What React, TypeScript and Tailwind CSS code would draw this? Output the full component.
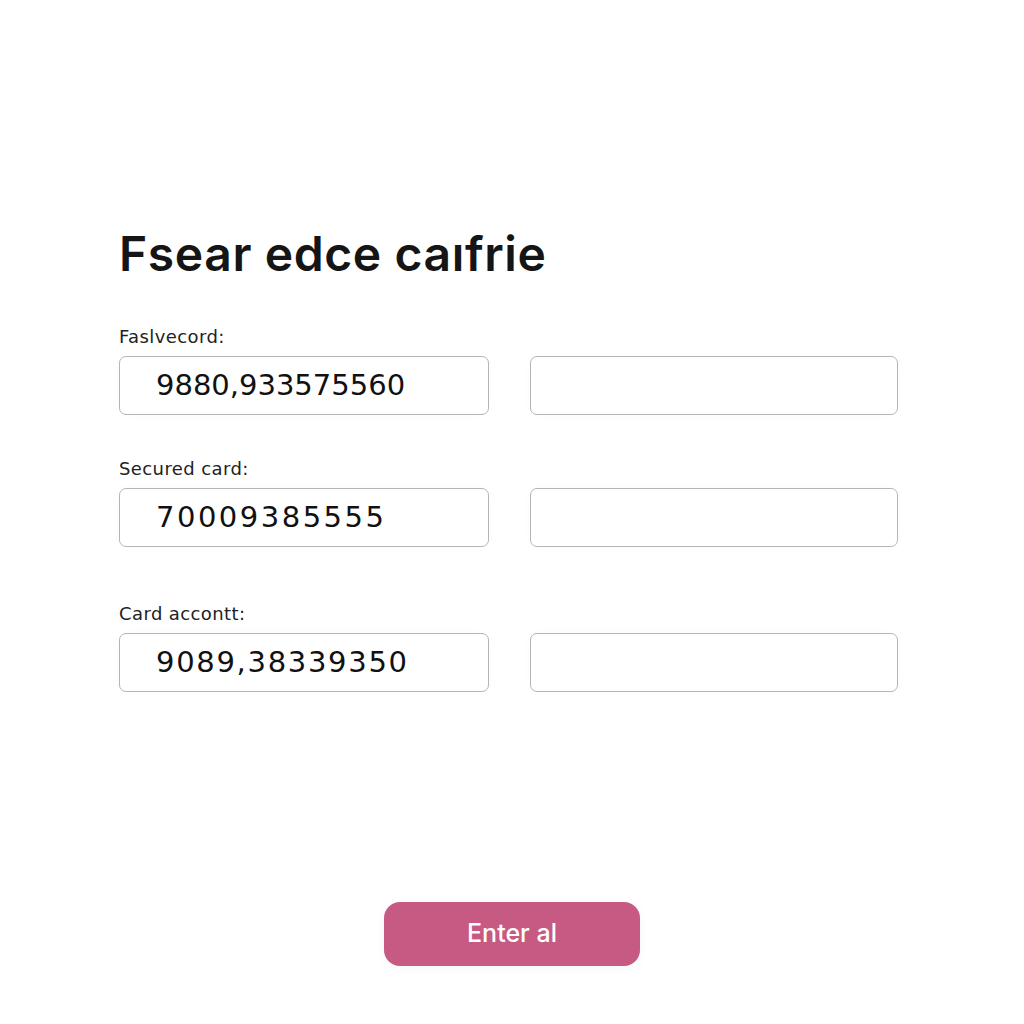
import React from "react"

const rows = [
  { label: "Faslvecord:", value: "9880,933575560", track: "tracking-[0px]", gap: "mt-[41px]" },
  { label: "Secured card:", value: "70009385555", track: "tracking-[2.5px]", gap: "mt-[42px]" },
  { label: "Card accontt:", value: "9089,38339350", track: "tracking-[1.7px]", gap: "mt-[55px]" },
]

export default function App() {
  return (
    <main className="min-h-screen w-full bg-white font-['Inter',sans-serif]">
      <div className="mx-auto w-[1024px] pl-[119px] pr-[125px] pt-[224px]">
        <h1 className="text-[48px] font-semibold leading-[60px] tracking-[0.6px] text-[#151515]">
          Fsear edce caıfrie
        </h1>

        <div className="flex flex-col">
          {rows.map((r) => (
            <section key={r.label} className={r.gap}>
              <label className="block font-['DejaVu_Sans',sans-serif] text-[18px] leading-[24px] tracking-[0.4px] text-[#222]">
                {r.label}
              </label>
              <div className="mt-[7px] grid grid-cols-[370px_368px] gap-[41px]">
                <div className="flex h-[59px] items-center rounded-[7px] border border-[#b5b5b5] pl-[36px] shadow-[0_0_12px_rgba(0,0,0,0.02)]">
                  <span className={`font-['DejaVu_Sans',sans-serif] text-[29px] text-[#111] ${r.track}`}>
                    {r.value}
                  </span>
                </div>
                <div className="h-[59px] rounded-[7px] border border-[#b5b5b5] shadow-[0_0_12px_rgba(0,0,0,0.02)]" />
              </div>
            </section>
          ))}
        </div>

        <div className="mt-[210px] flex justify-center pl-[6px]">
          <button className="h-[64px] w-[256px] rounded-[16px] bg-[#c75a82] text-[25px] font-medium text-white shadow-[0_2px_12px_rgba(0,0,0,0.04)]">
            Enter al
          </button>
        </div>
      </div>
    </main>
  )
}
